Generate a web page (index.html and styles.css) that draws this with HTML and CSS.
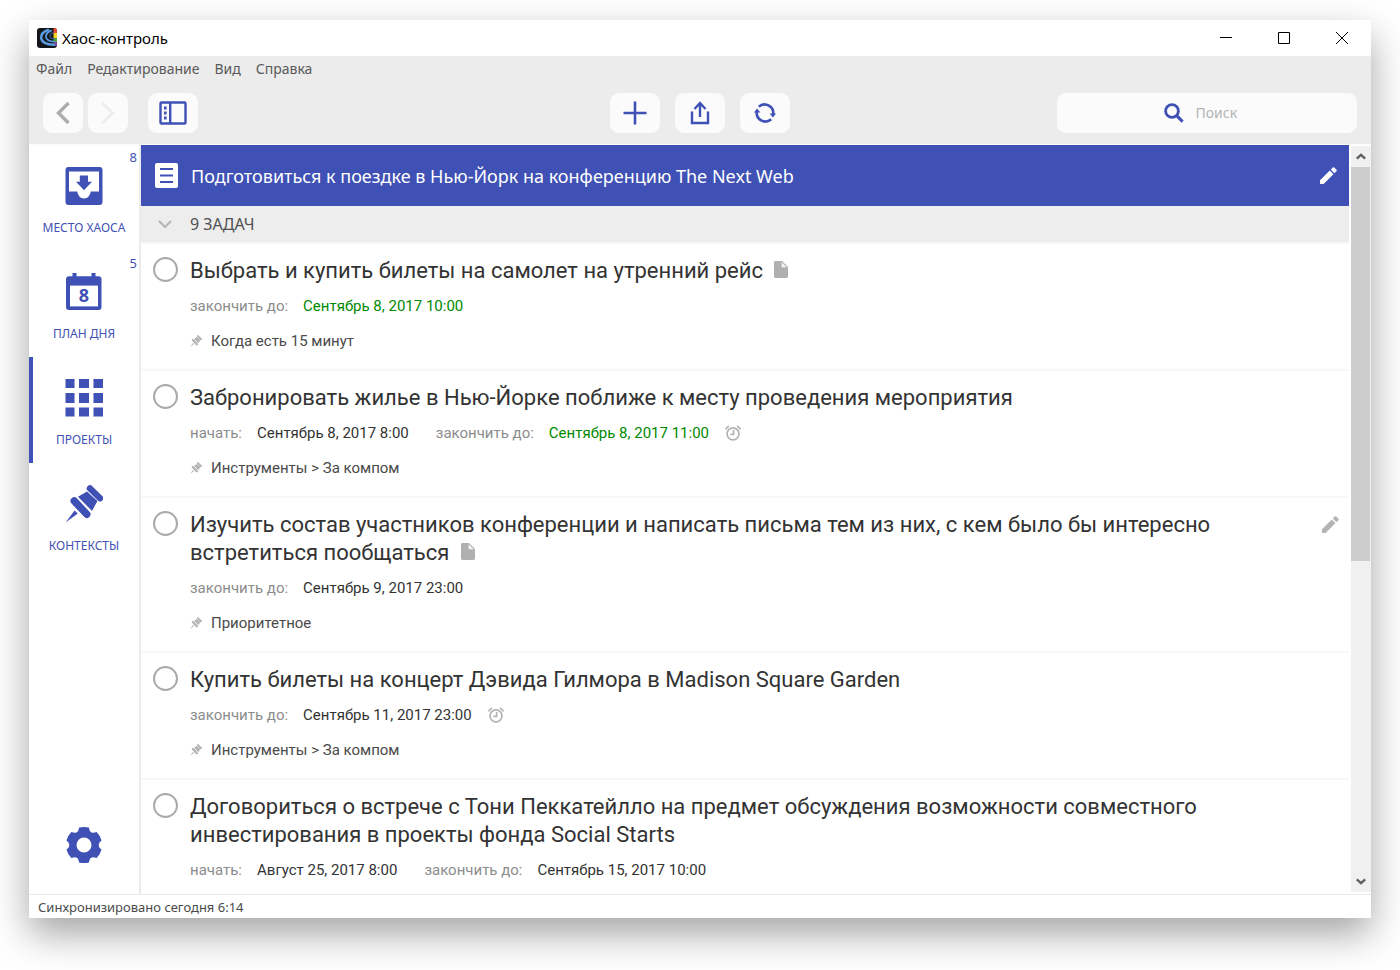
FILE: index.html
```html
<!DOCTYPE html>
<html lang="ru">
<head>
<meta charset="utf-8">
<title>Хаос-контроль</title>
<link rel="stylesheet" href="styles.css">
</head>
<body>
<svg class="sprite" aria-hidden="true">
  <symbol id="pin" viewBox="0 0 38 38">
    <path d="M25 3.5 35 13.2" fill="none" stroke="currentColor" stroke-width="6.4" stroke-linecap="round"/>
    <path d="M9.2 15.9 21.8 29.3" fill="none" stroke="currentColor" stroke-width="7.4" stroke-linecap="round"/>
    <path d="M13 11.800 22 6.600 32.400 16 27 26Z M0.6 37.6 9.6 25.6 12.8 28.4Z" fill="currentColor"/>
  </symbol>
  <symbol id="pencil" viewBox="0 0 17 17">
    <path d="M0 13.2 9.8 3.6 13.4 7.2 3.6 17H0Z M10.8 2.6 12.8 0.6Q13.6-.1 14.5.7L16.3 2.5Q17.2 3.4 16.4 4.2L14.4 6.2Z" fill="currentColor"/>
  </symbol>
  <symbol id="note" viewBox="0 0 14 17">
    <path d="M1.4 0H8L14 6V15.6Q14 17 12.6 17H1.4Q0 17 0 15.6V1.4Q0 0 1.4 0Z" fill="currentColor"/>
    <path d="M7.6 1.2V6.2H12.8Z" fill="#f4f4f4"/>
  </symbol>
  <symbol id="alarm" viewBox="0 0 16 16">
    <g fill="none" stroke="currentColor" stroke-width="1.7">
      <circle cx="8" cy="8.8" r="6"/>
      <path d="M8.6 5V9.4H5.2M.7 4.4Q1.6 2 4 1.100M15.3 4.4Q14.4 2 12 1.100"/>
    </g>
  </symbol>
</svg>

<div class="window">
  <header class="titlebar">
    <svg class="app-logo" viewBox="0 0 20 20" aria-hidden="true">
      <clipPath id="logo-clip"><rect width="20" height="20" rx="3"/></clipPath>
      <g clip-path="url(#logo-clip)">
        <rect width="20" height="20" fill="#14161c"/>
        <path d="M16.500 0H20v5h-3.500z" fill="#e5482d"/>
        <path d="M16.500 5H20v5h-3.500z" fill="#f6d21c"/>
        <path d="M16.500 10H20v4h-3.500z" fill="#4da03f"/>
        <path d="M17 14h3v4h-3z" fill="#7c3f9c"/>
        <g fill="none" stroke-linecap="round">
          <path d="M11 2Q3.600 4.500 4.200 10.500 5.500 16.500 17 16.800" stroke="#5b9be0" stroke-width="2.600"/>
          <path d="M14 2.600Q8.400 5 9 9.500 10.500 13.500 17 13.600" stroke="#5b9be0" stroke-width="1.800"/>
          <path d="M16.500 4Q12.500 6 13 8.800 14 11 17 11.200" stroke="#33578c" stroke-width="1.200"/>
        </g>
      </g>
    </svg>
    <h1 class="app-title">Хаос-контроль</h1>
    <div class="window-controls">
      <button class="win-btn" aria-label="Свернуть"><svg viewBox="0 0 12 12"><path d="M0 5.500H12"/></svg></button>
      <button class="win-btn" aria-label="Развернуть"><svg viewBox="0 0 12 12"><path d="M.5.5h11v11H.5z"/></svg></button>
      <button class="win-btn" aria-label="Закрыть"><svg viewBox="0 0 12 12"><path d="M0 0 12 12M12 0 0 12"/></svg></button>
    </div>
  </header>

  <nav class="menubar" aria-label="Меню">
    <button>Файл</button>
    <button>Редактирование</button>
    <button>Вид</button>
    <button>Справка</button>
  </nav>

  <div class="toolbar">
    <div class="tools tools-left">
      <button class="tool tool-nav" aria-label="Назад"><svg width="14" height="24" viewBox="0 0 14 24"><path d="M12.500 2 2.500 12l10 10" fill="none" stroke="#acacac" stroke-width="3.400"/></svg></button>
      <button class="tool tool-nav" aria-label="Вперёд"><svg width="14" height="24" viewBox="0 0 14 24"><path d="M1.500 2l10 10-10 10" fill="none" stroke="#ededed" stroke-width="3"/></svg></button>
      <button class="tool tool-panel" aria-label="Боковая панель">
        <svg width="28" height="24" viewBox="0 0 28 24"><rect x="1.500" y="1.500" width="25" height="21" rx="1" fill="none" stroke="#3f51b5" stroke-width="2.400"/><path d="M10 1h2.400v22H10zM5 5.500h2.600v3H5zM5 10.500h2.600v3H5zM5 15.500h2.600v3H5z" fill="#3f51b5"/></svg>
      </button>
    </div>
    <div class="tools tools-center">
      <button class="tool" aria-label="Добавить"><svg width="24" height="24" viewBox="0 0 24 24"><path d="M12 .5v23M.5 12h23" stroke="#3f51b5" stroke-width="2.600"/></svg></button>
      <button class="tool" aria-label="Поделиться"><svg width="20" height="24" viewBox="0 0 20 24"><g fill="none" stroke="#3f51b5" stroke-width="2.400"><path d="M2 10.500v11.500h16V10.500"/><path d="M10 16V2.500M4.500 8 10 2l5.500 6"/></g></svg></button>
      <button class="tool" aria-label="Синхронизировать"><svg width="22" height="22" viewBox="0 0 22 22"><g fill="none" stroke="#3f51b5" stroke-width="2.600"><path d="M4.800 4.800A8.600 8.600 0 0 1 19 13"/><path d="M17.200 17.200A8.600 8.600 0 0 1 3 9"/></g><path d="M15.600 11.500H22L19 15.400ZM0 10.500H6.400L3 6.600Z" fill="#3f51b5"/></svg></button>
    </div>
    <label class="search">
      <svg width="20" height="20" viewBox="0 0 20 20" aria-hidden="true"><circle cx="8" cy="8" r="6.400" fill="none" stroke="#3f51b5" stroke-width="2.800"/><path d="M12.600 12.600 18.600 18.600" stroke="#3f51b5" stroke-width="3"/></svg>
      <input type="search" placeholder="Поиск" aria-label="Поиск">
    </label>
  </div>

  <div class="content">
    <nav class="sidebar" aria-label="Разделы">
      <a class="section" href="#inbox">
        <span class="badge">8</span>
        <svg viewBox="0 0 38 38"><rect x=".5" width="37" height="38" rx="3" fill="currentColor"/><path d="M4 4.600H34V24.600H25.800Q24.600 31.400 19 31.400T12.200 24.600H4Z" fill="#fff"/><path d="M14.800 8.600H23V14.800H27L19 23.200 11 14.800H14.800Z" fill="currentColor"/></svg>
        <span class="section-name">МЕСТО ХАОСА</span>
      </a>
      <a class="section" href="#day">
        <span class="badge">5</span>
        <svg viewBox="0 0 38 38"><path d="M7.500 0h4v3.200h15V0h4v3.200H33.500Q36.500 3.200 36.500 6.200V34Q36.500 37 33.500 37H4Q1 37 1 34V6.200Q1 3.200 4 3.200h3.500Z" fill="currentColor"/><path d="M5 12.600H33V33.400H5Z" fill="#fff"/><text x="19" y="29" class="day-number">8</text></svg>
        <span class="section-name">ПЛАН ДНЯ</span>
      </a>
      <a class="section is-active" href="#projects" aria-current="page">
        <svg viewBox="0 0 38 38"><path d="M.5 0h9v9h-9zM14 0h10v9H14zM28.500 0h9.500v9h-9.500zM.5 14h9v10h-9zM14 14h10v10H14zM28.500 14h9.500v10h-9.500zM.5 28.500h9v9h-9zM14 28.500h10v9H14zM28.500 28.500h9.500v9h-9.500z" fill="currentColor"/></svg>
        <span class="section-name">ПРОЕКТЫ</span>
      </a>
      <a class="section" href="#contexts">
        <svg><use href="#pin"/></svg>
        <span class="section-name">КОНТЕКСТЫ</span>
      </a>
      <button class="settings" aria-label="Настройки">
        <svg width="36" height="38" viewBox="-18 -19 36 38">
          <circle r="11" fill="none" stroke="#3f51b5" stroke-width="7"/>
          <g fill="#3f51b5">
            <path id="tooth" d="M-8.500-11.500Q-5.500-13-4.900-17.400 0-18.800 4.900-17.400 5.500-13 8.500-11.500Z"/>
            <use href="#tooth" transform="rotate(60)"/><use href="#tooth" transform="rotate(120)"/><use href="#tooth" transform="rotate(180)"/><use href="#tooth" transform="rotate(240)"/><use href="#tooth" transform="rotate(300)"/>
          </g>
        </svg>
      </button>
    </nav>

    <main class="project">
      <div class="project-head">
        <svg width="23" height="25" viewBox="0 0 23 25" aria-hidden="true"><rect width="23" height="25" rx="2" fill="#fff"/><path d="M5 6h13M5 12.500h13M5 19h13" stroke="#3f51b5" stroke-width="2.200"/></svg>
        <h2>Подготовиться к поездке в Нью-Йорк на конференцию The Next Web</h2>
        <button class="edit" aria-label="Изменить проект"><svg><use href="#pencil"/></svg></button>
      </div>
      <button class="group-head" aria-expanded="true">
        <svg width="14" height="8" viewBox="0 0 14 8" aria-hidden="true"><path d="M1 1l6 6 6-6" fill="none" stroke="#b4b4b4" stroke-width="2"/></svg>
        <span>9 ЗАДАЧ</span>
      </button>

      <ul class="tasks">
        <li class="task">
          <input type="checkbox" id="t1">
          <div class="task-body">
            <label class="task-title" for="t1">Выбрать и купить билеты на самолет на утренний рейс <svg class="note"><use href="#note"/></svg></label>
            <div class="dates"><span class="date"><span class="key">закончить до:</span><time class="soon">Сентябрь 8, 2017 10:00</time></span></div>
            <div class="context"><svg><use href="#pin"/></svg>Когда есть 15 минут</div>
          </div>
        </li>
        <li class="task">
          <input type="checkbox" id="t2">
          <div class="task-body">
            <label class="task-title" for="t2">Забронировать жилье в Нью-Йорке поближе к месту проведения мероприятия</label>
            <div class="dates"><span class="date"><span class="key">начать:</span><time>Сентябрь 8, 2017 8:00</time></span><span class="date"><span class="key">закончить до:</span><time class="soon">Сентябрь 8, 2017 11:00</time><svg class="alarm"><use href="#alarm"/></svg></span></div>
            <div class="context"><svg><use href="#pin"/></svg>Инструменты &gt; За компом</div>
          </div>
        </li>
        <li class="task">
          <input type="checkbox" id="t3">
          <div class="task-body">
            <label class="task-title" for="t3">Изучить состав участников конференции и написать письма тем из них, с кем было бы интересно встретиться пообщаться <svg class="note"><use href="#note"/></svg></label>
            <div class="dates"><span class="date"><span class="key">закончить до:</span><time>Сентябрь 9, 2017 23:00</time></span></div>
            <div class="context"><svg><use href="#pin"/></svg>Приоритетное</div>
          </div>
          <button class="edit" aria-label="Изменить задачу"><svg><use href="#pencil"/></svg></button>
        </li>
        <li class="task">
          <input type="checkbox" id="t4">
          <div class="task-body">
            <label class="task-title" for="t4">Купить билеты на концерт Дэвида Гилмора в Madison Square Garden</label>
            <div class="dates"><span class="date"><span class="key">закончить до:</span><time>Сентябрь 11, 2017 23:00</time><svg class="alarm"><use href="#alarm"/></svg></span></div>
            <div class="context"><svg><use href="#pin"/></svg>Инструменты &gt; За компом</div>
          </div>
        </li>
        <li class="task">
          <input type="checkbox" id="t5">
          <div class="task-body">
            <label class="task-title" for="t5">Договориться о встрече с Тони Пеккатейлло на предмет обсуждения возможности совместного инвестирования в проекты фонда Social Starts</label>
            <div class="dates"><span class="date"><span class="key">начать:</span><time>Август 25, 2017 8:00</time></span><span class="date"><span class="key">закончить до:</span><time>Сентябрь 15, 2017 10:00</time></span></div>
          </div>
        </li>
      </ul>
    </main>

    <div class="scrollbar">
      <button aria-label="Прокрутить вверх"><svg width="10" height="7" viewBox="0 0 10 7"><path d="M.8 5.600 5 1.800 9.200 5.600" fill="none" stroke="#606060" stroke-width="2.400"/></svg></button>
      <div class="track"><div class="thumb"></div></div>
      <button aria-label="Прокрутить вниз"><svg width="10" height="7" viewBox="0 0 10 7"><path d="M.8 1.400 5 5.200 9.200 1.400" fill="none" stroke="#606060" stroke-width="2.400"/></svg></button>
    </div>
  </div>

  <footer class="statusbar">Синхронизировано сегодня 6:14</footer>
</div>
</body>
</html>
```

FILE: styles.css
```css
* { box-sizing: border-box; }

:root {
  --accent: #3f51b5;
  --chrome: #ececec;
  --muted: #8c8c8c;
  --icon-gray: #b4b4b4;
}

body {
  display: flex;
  height: 100vh;
  margin: 0;
  padding: 20px 29px 52px;
  background: #fff;
  color: #333;
  font: 14px/20px "Noto Sans", "DejaVu Sans", sans-serif;
}

button {
  padding: 0;
  border: 0;
  background: none;
  color: inherit;
  font: inherit;
}

svg { flex: none; }

.sprite {
  position: absolute;
  width: 0;
  height: 0;
}

.window {
  display: flex;
  flex: 1;
  flex-direction: column;
  min-width: 0;
  background: #fff;
  box-shadow: 0 16px 36px rgba(0, 0, 0, .36);
}

/* Title bar */
.titlebar {
  display: flex;
  align-items: center;
  height: 36px;
  padding-left: 8px;
}

.app-logo { width: 20px; height: 20px; }

.app-title {
  flex: 1;
  margin: 0 0 0 5px;
  color: #000;
  font-size: 15px;
  font-weight: 400;
  line-height: 20px;
}

.window-controls { display: flex; }

.win-btn {
  display: grid;
  place-items: center;
  width: 58px;
  height: 36px;
}

.win-btn svg {
  width: 12px;
  height: 12px;
  fill: none;
  stroke: #000;
}

/* Menu and toolbar */
.menubar {
  display: flex;
  gap: 15px;
  padding: 3px 7px 4px;
  background: var(--chrome);
  color: #5a5a5a;
}

.toolbar {
  display: grid;
  grid-template-columns: 1fr auto 1fr;
  align-items: center;
  padding: 10px 14px 11px;
  border-bottom: 1px solid #fbfbfb;
  background: var(--chrome);
}

.tools { display: flex; }
.tools-left { gap: 5px; }
.tools-center { gap: 15px; }

.tool {
  display: grid;
  place-items: center;
  width: 50px;
  height: 40px;
  border-radius: 9px;
  background: #fbfbfb;
}

.tool-nav { width: 40px; }
.tool-panel { margin-left: 15px; }

.search {
  display: flex;
  align-items: center;
  justify-content: center;
  justify-self: end;
  gap: 12px;
  width: 300px;
  height: 40px;
  padding-left: 7px;
  border-radius: 9px;
  background: #fbfbfb;
}

.search input {
  width: 62px;
  padding: 0;
  border: 0;
  outline: 0;
  background: none;
  font: inherit;
}

.search input::placeholder { color: #b4b4b4; opacity: 1; }

/* Sidebar */
.content {
  display: flex;
  flex: 1;
  min-height: 0;
}

.sidebar {
  display: flex;
  flex: none;
  flex-direction: column;
  width: 112px;
  border-right: 2px solid #ebebeb;
  color: var(--accent);
}

.section {
  position: relative;
  display: flex;
  flex-direction: column;
  align-items: center;
  gap: 15px;
  height: 106px;
  padding-top: 22px;
  color: inherit;
  font-size: 12px;
  line-height: 16px;
  text-decoration: none;
}

.section svg { width: 38px; height: 38px; }
.section.is-active { box-shadow: inset 4px 0 var(--accent); }

.badge {
  position: absolute;
  top: 4px;
  right: 2px;
  font-size: 13px;
}

.day-number {
  fill: currentColor;
  font: 700 18px "Noto Sans", "DejaVu Sans", sans-serif;
  text-anchor: middle;
}

.settings { margin: auto auto 30px; }
.settings svg { display: block; }

/* Project */
.project {
  flex: 1;
  min-width: 0;
  overflow: hidden;
}

.project-head {
  display: flex;
  align-items: center;
  gap: 13px;
  height: 61px;
  padding: 0 12px 0 14px;
  background: var(--accent);
  color: #fff;
}

.project-head h2 {
  flex: 1;
  margin: 0;
  font-size: 18px;
  font-weight: 400;
}

.edit svg {
  display: block;
  width: 17px;
  height: 17px;
}

.group-head {
  display: flex;
  align-items: center;
  gap: 18px;
  width: 100%;
  height: 38px;
  padding-left: 17px;
  border-bottom: 2px solid #f7f7f7;
  background: #ededed;
  color: #505050;
  font-size: 16px;
}

.tasks {
  margin: 0;
  padding: 0;
  list-style: none;
  font-family: Roboto, "Noto Sans", sans-serif;
  font-size: 15px;
}

.task {
  display: flex;
  gap: 12px;
  padding: 13px 10px 18px 12px;
  border-bottom: 2px solid #f8f8f8;
}

.task input {
  flex: none;
  width: 25px;
  height: 25px;
  margin: 0;
  border: 2px solid #aaa;
  border-radius: 50%;
  appearance: none;
}

.task-body {
  flex: 1;
  max-width: 1115px;
}

.task-title {
  display: block;
  font-size: 22px;
  line-height: 28px;
}

.note {
  width: 14px;
  height: 17px;
  margin-left: 6px;
  color: #b0b0b0;
}

.dates {
  display: flex;
  gap: 27px;
  margin-top: 11px;
}

.date { display: flex; align-items: center; }
.key { margin-right: 15px; color: var(--muted); }
.soon { color: #008a00; }

.alarm {
  width: 16px;
  height: 16px;
  margin-left: 16px;
  color: var(--icon-gray);
}

.context {
  display: flex;
  align-items: center;
  gap: 9px;
  margin-top: 15px;
  color: #4a4a4a;
}

.context svg {
  width: 12px;
  height: 12px;
  color: var(--icon-gray);
}

.task .edit {
  align-self: flex-start;
  margin: 5px 0 0 auto;
  color: var(--icon-gray);
}

/* Scrollbar */
.scrollbar {
  display: flex;
  flex: none;
  flex-direction: column;
  width: 20px;
  margin: 1px 0 2px 2px;
  background: #f0f0f0;
}

.scrollbar button {
  display: grid;
  place-items: center;
  height: 21px;
}

.track { flex: 1; padding-right: 1px; }
.thumb { height: 56%; background: #cdcdcd; }

.statusbar {
  padding: 2px 9px 1px;
  border-top: 1px solid #ebebeb;
  color: #4a4a4a;
  font-size: 13px;
}
```
